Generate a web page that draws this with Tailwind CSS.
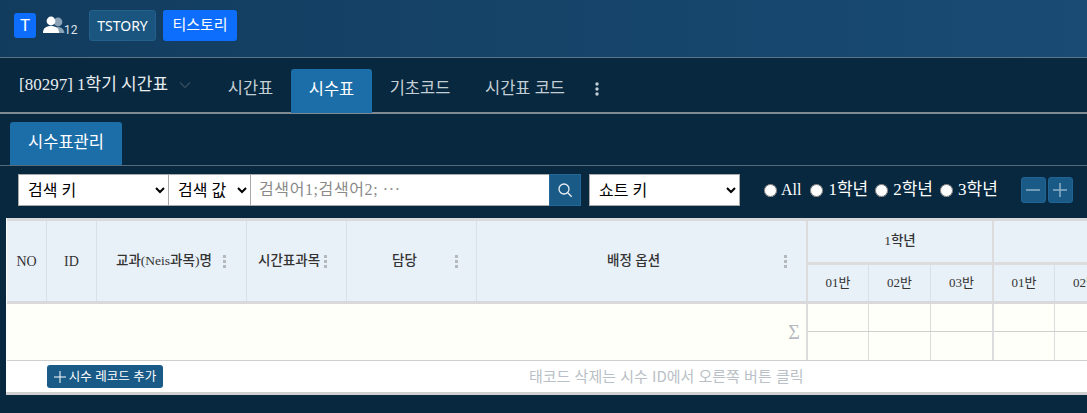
<!DOCTYPE html>
<html lang="ko">
<head>
<meta charset="utf-8">
<script src="https://cdn.jsdelivr.net/npm/@tailwindcss/browser@4"></script>
</head>
<body class="w-[1087px] h-[413px] overflow-hidden bg-[#07283f] font-['Liberation_Serif','Noto_Sans_CJK_KR',serif]">
<header class="h-[58px] flex items-start pt-[10px] pl-[14px] bg-gradient-to-r from-[#123c5e] to-[#194b74] border-b border-[#5c7488] font-['Roboto','Noto_Sans_CJK_KR',sans-serif]">
  <div class="w-[22px] h-[25px] mt-[3px] rounded-[3px] bg-[#0d6efd] text-white flex items-center justify-center text-[17px]">T</div>
  <div class="relative ml-[7px] mt-[6px] w-[34px] h-[22px]">
    <svg class="absolute left-0 top-0" width="24" height="18" viewBox="0 0 24 18">
      <circle cx="15" cy="6" r="4.4" fill="#8ba3b7"/>
      <path d="M10 17c0-4 2-6 5-6s6 2 6.500 6z" fill="#8ba3b7"/>
      <circle cx="8" cy="5" r="4.400" fill="#fff"/>
      <path d="M0 17c0-5 3-7 8-7s8 2 8 7z" fill="#fff"/>
    </svg>
    <span class="absolute left-[21px] top-[7px] text-[12px] leading-[15px] text-[#dbe4ea]">12</span>
  </div>
  <button class="ml-[12px] h-[31px] w-[67px] rounded-[3px] border border-[#24608c] bg-[#1a5580] text-white text-[14px] font-['Noto_Sans',sans-serif]">TSTORY</button>
  <button class="ml-[7px] h-[31px] w-[74px] rounded-[3px] bg-[#0d6efd] text-white text-[15px]">티스토리</button>
</header>
<nav class="h-[56px] flex items-end border-b-2 border-[#7f8a92]">
  <div class="w-[198px] pl-[19px] self-start pt-[15px] flex items-center gap-[11px] text-[17px] leading-[24px] text-[#e8edf0] whitespace-nowrap">
    <span>[80297] 1학기 시간표</span>
    <svg width="12" height="8" viewBox="0 0 12 8" fill="none" stroke="#32495b" stroke-width="1.500"><path d="M1 1.500l5 5 5-5"/></svg>
  </div>
  <a class="w-[93px] h-[44px] pl-[12px] pb-[2px] flex items-center justify-center text-[16.500px] text-[#c4ced5]">시간표</a>
  <a class="w-[81px] h-[44px] -mb-px pb-[1px] flex items-center justify-center text-[16.500px] text-white bg-[#1c6ea8] rounded-t-[3px]">시수표</a>
  <a class="w-[96px] h-[44px] pb-[2px] flex items-center justify-center text-[16.500px] text-[#c4ced5]">기초코드</a>
  <a class="w-[114px] h-[44px] pb-[2px] flex items-center justify-center text-[16.500px] text-[#c4ced5] whitespace-nowrap">시간표 코드</a>
  <span class="h-[44px] w-[30px] pb-[2px] flex items-center justify-center">
    <svg width="4" height="14" viewBox="0 0 4 14" fill="#c4ced5"><circle cx="2" cy="2" r="1.700"/><circle cx="2" cy="7" r="1.700"/><circle cx="2" cy="12" r="1.700"/></svg>
  </span>
</nav>
<section class="h-[52px] pt-[8px] pl-[10px] border-b border-[#54697a] flex items-start">
  <div class="w-[112px] h-[43px] bg-[#1c6ea8] rounded-t-[3px] text-white text-[16.500px] flex items-center justify-center">시수표관리</div>
</section>
<form class="h-[52px] pl-[18px] pt-[8px] flex items-start">
  <select class="w-[151px] h-[32px] pl-[5px] bg-white border border-[#a9a9a9] text-black text-[16px]"><option>검색 키</option></select>
  <select class="w-[83px] h-[32px] pl-[5px] -ml-px bg-white border border-[#a9a9a9] text-black text-[16px]"><option>검색 값</option></select>
  <input class="w-[300px] h-[32px] pl-[8px] -ml-px bg-white border border-[#a9a9a9] text-[16px] tracking-[0.6px] placeholder:text-[#8a8a8a]" placeholder="검색어1;검색어2; ···">
  <button type="button" class="w-[32px] h-[32px] -ml-px bg-[#1a5a87] border border-[#24689a] flex items-center justify-center">
    <svg width="16" height="16" viewBox="0 0 16 16" fill="none" stroke="#e8f0f5" stroke-width="1.300"><circle cx="7" cy="7" r="5"/><path d="M10.700 10.700l4 4"/></svg>
  </button>
  <select class="ml-[8px] w-[151px] h-[32px] pl-[5px] bg-white border border-[#a9a9a9] text-black text-[16px]"><option>쇼트 키</option></select>
  <div class="ml-[24px] h-[32px] flex items-center text-white text-[17px] whitespace-nowrap">
    <input type="radio" name="g" class="w-[13px] h-[13px] mr-[4px]"><span class="mr-[9px] text-[16px]">All</span>
    <input type="radio" name="g" class="w-[13px] h-[13px] mr-[5px]"><span class="mr-[7px]">1학년</span>
    <input type="radio" name="g" class="w-[13px] h-[13px] mr-[5px]"><span class="mr-[7px]">2학년</span>
    <input type="radio" name="g" class="w-[13px] h-[13px] mr-[5px]"><span>3학년</span>
  </div>
  <div class="ml-[23px] mt-[3px] flex gap-[2px]">
    <button type="button" class="w-[25px] h-[26px] rounded-[3px] bg-[#1a5a87] border border-[#1f6495] flex items-center justify-center"><svg width="14" height="14" viewBox="0 0 14 14" stroke="#8fb0c8" stroke-width="1.500"><path d="M0 7h14"/></svg></button>
    <button type="button" class="w-[25px] h-[26px] rounded-[3px] bg-[#1a5a87] border border-[#1f6495] flex items-center justify-center"><svg width="14" height="14" viewBox="0 0 14 14" stroke="#8fb0c8" stroke-width="1.500"><path d="M0 7h14M7 0v14"/></svg></button>
  </div>
</form>
<main class="ml-[6px] h-[177px] overflow-hidden bg-white">
  <div class="w-[1300px] pl-px border-b-[3px] border-[#cfcfcf]">
    <div class="flex h-[86px] border-y-[3px] border-[#d9d9dc] bg-[#e8f0f8] text-[13.500px] text-[#333]">
      <div class="w-[40px] border-r border-[#d9e0e8] flex items-center justify-center text-[14px]">NO</div>
      <div class="w-[50px] border-r border-[#d9e0e8] flex items-center justify-center text-[14px]">ID</div>
      <div class="w-[150px] border-r border-[#d9e0e8] flex items-center pl-[19px] gap-[11px] whitespace-nowrap"><span class="font-medium">교과(Neis과목)명</span><svg width="3" height="13" viewBox="0 0 3 13" fill="#b4b9be"><rect width="3" height="3"/><rect y="5" width="3" height="3"/><rect y="10" width="3" height="3"/></svg></div>
      <div class="w-[100px] border-r border-[#d9e0e8] flex items-center pl-[11px] gap-[4px] whitespace-nowrap"><span class="font-medium">시간표과목</span><svg width="3" height="13" viewBox="0 0 3 13" fill="#b4b9be"><rect width="3" height="3"/><rect y="5" width="3" height="3"/><rect y="10" width="3" height="3"/></svg></div>
      <div class="w-[130px] border-r border-[#d9e0e8] flex items-center pl-[45px]"><span class="w-[63px] font-medium">담당</span><svg width="3" height="13" viewBox="0 0 3 13" fill="#b4b9be"><rect width="3" height="3"/><rect y="5" width="3" height="3"/><rect y="10" width="3" height="3"/></svg></div>
      <div class="w-[331px] border-r-2 border-[#dcdcde] flex items-center pl-[130px]"><span class="w-[177px] font-medium">배정 옵션</span><svg width="3" height="13" viewBox="0 0 3 13" fill="#b4b9be"><rect width="3" height="3"/><rect y="5" width="3" height="3"/><rect y="10" width="3" height="3"/></svg></div>
      <div class="w-[186px] border-r-2 border-[#dcdcde] flex flex-col">
        <div class="h-[44px] border-b-[3px] border-[#dcdcde] flex items-center justify-center font-medium">1학년</div>
        <div class="flex-1 flex text-[13px]"><div class="w-[61px] border-r border-[#d9e0e8] flex items-center justify-center">01반</div><div class="w-[62px] border-r border-[#d9e0e8] flex items-center justify-center">02반</div><div class="flex-1 flex items-center justify-center">03반</div></div>
      </div>
      <div class="w-[186px] flex flex-col">
        <div class="h-[44px] border-b-[3px] border-[#dcdcde]"></div>
        <div class="flex-1 flex text-[13px]"><div class="w-[61px] border-r border-[#d9e0e8] flex items-center justify-center">01반</div><div class="w-[62px] border-r border-[#d9e0e8] flex items-center justify-center">02반</div></div>
      </div>
    </div>
    <div class="flex h-[57px] bg-[#fefff9] border-b border-[#cfcfcf]">
      <div class="w-[801px] flex items-center justify-end pr-[6px] text-[20px] text-[#b5bac0] border-r-2 border-[#dcdcdc]">Σ</div>
      <div class="w-[186px] border-r-2 border-[#dcdcde] flex flex-col">
        <div class="h-[28px] flex border-b border-[#cfcfcf]"><div class="w-[61px] border-r border-[#dcdcdc]"></div><div class="w-[62px] border-r border-[#dcdcdc]"></div></div>
        <div class="flex-1 flex"><div class="w-[61px] border-r border-[#dcdcdc]"></div><div class="w-[62px] border-r border-[#dcdcdc]"></div></div>
      </div>
      <div class="w-[186px] flex flex-col">
        <div class="h-[28px] flex border-b border-[#cfcfcf]"><div class="w-[61px] border-r border-[#dcdcdc]"></div></div>
        <div class="flex-1 flex"><div class="w-[61px] border-r border-[#dcdcdc]"></div></div>
      </div>
    </div>
    <div class="relative h-[31px] w-[1080px] flex items-center text-[15px] pl-[522px] text-[#b9bfc6] whitespace-nowrap font-['Noto_Sans_CJK_KR',sans-serif]">
      <button type="button" class="absolute left-[40px] top-[4px] w-[116px] h-[23px] rounded-[3px] bg-[#1a5a87] text-white text-[12.500px] whitespace-nowrap flex items-center justify-center gap-[3px]"><svg width="12" height="12" viewBox="0 0 12 12" stroke="#fff" stroke-width="1"><path d="M0 6h12M6 0v12"/></svg>시수 레코드 추가</button>
      태코드 삭제는 시수 ID에서 오른쪽 버튼 클릭
    </div>
  </div>
</main>
</body>
</html>
